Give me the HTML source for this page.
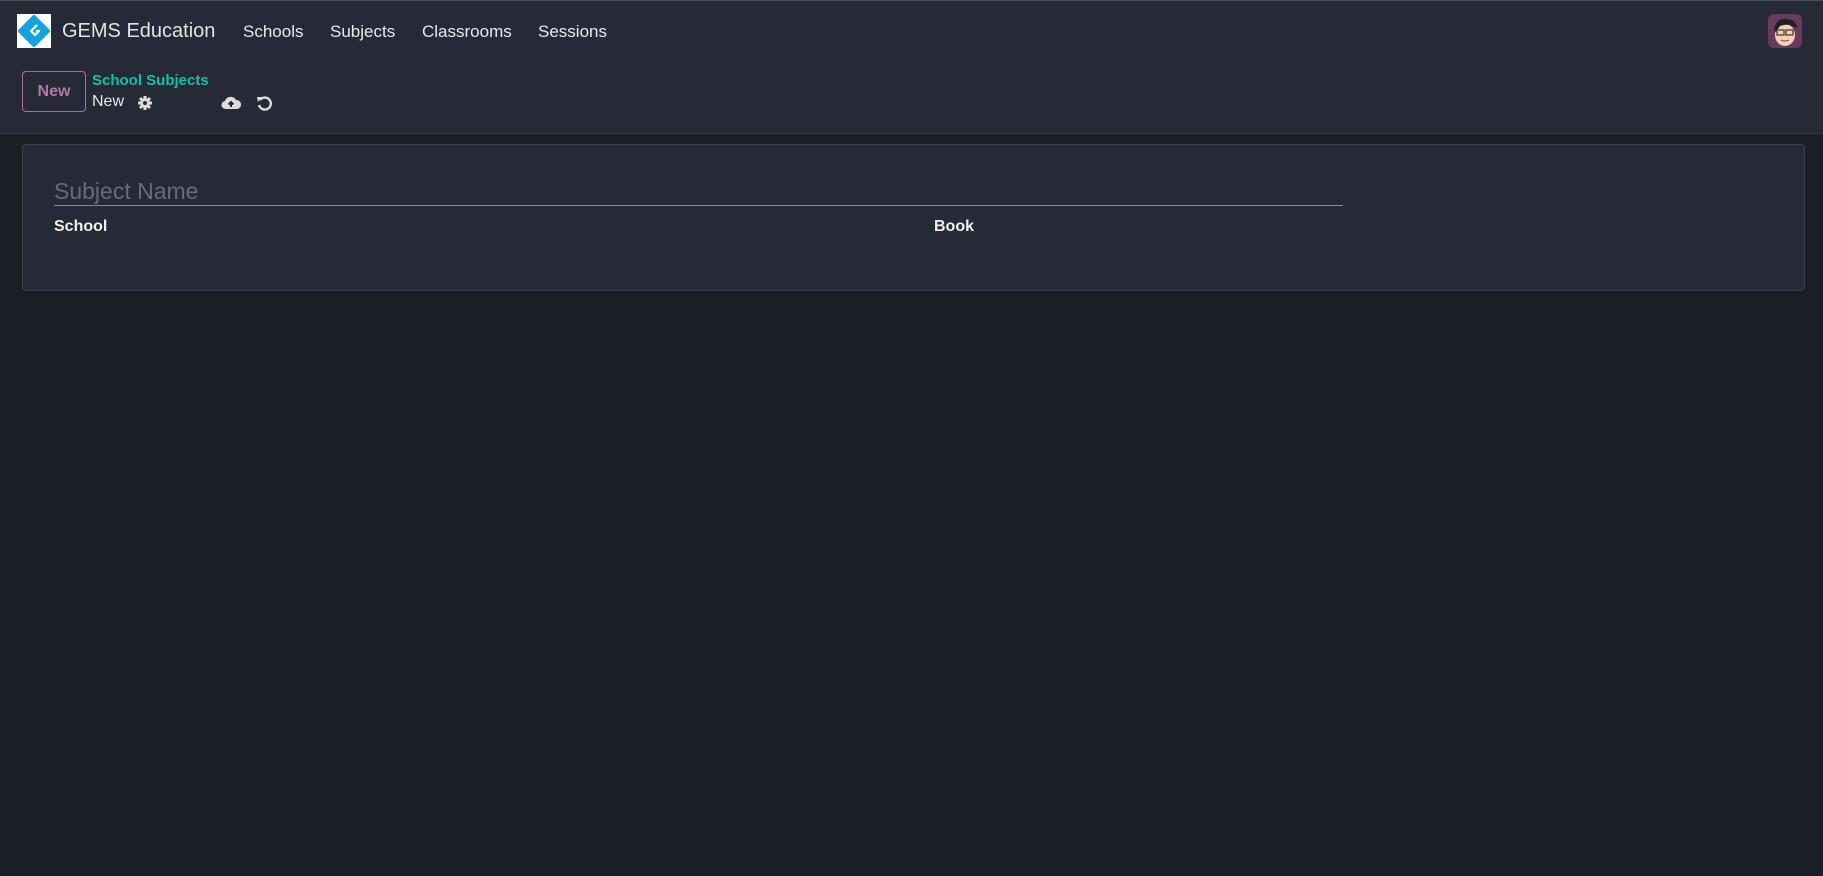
<!DOCTYPE html>
<html><head><meta charset="utf-8"><style>
*{box-sizing:border-box;margin:0;padding:0}
body{width:1823px;height:876px;overflow:hidden;background:#1b1e26;font-family:"Liberation Sans",sans-serif;color:#e4e6eb;position:relative}
.top{position:absolute;left:0;top:0;width:1823px;height:134px;background:#262a36;border-top:1px solid #4a4d55;border-bottom:1px solid #33373f}
.abs{position:absolute;white-space:nowrap}
.nav{font-size:17px;color:#e8e9ec;top:22px}
.card{position:absolute;left:22px;top:144px;width:1783px;height:147px;background:#262a36;border:1px solid #3b404b;border-radius:4px}
</style></head><body>
<div class="top"></div>
<div class="abs" style="left:17px;top:14px;width:34px;height:34px;background:#fff">
<svg width="34" height="34" viewBox="0 0 34 34"><path d="M17 3 L31 17 L17 31 L3 17 Z" fill="#13a3dd" stroke="#13a3dd" stroke-width="4" stroke-linejoin="round"/><path d="M20 11 L14 17 L18 21 L22 17 L19 17" fill="none" stroke="#fff" stroke-width="2.2" stroke-linejoin="round"/></svg></div>
<div class="abs" style="left:62px;top:20px;font-size:20px;color:#e2e3e6">GEMS Education</div>
<div class="abs nav" style="left:243px">Schools</div>
<div class="abs nav" style="left:330px">Subjects</div>
<div class="abs nav" style="left:422px">Classrooms</div>
<div class="abs nav" style="left:538px">Sessions</div>
<div class="abs" style="left:1768px;top:14px;width:34px;height:34px;border-radius:6px;background:#6a3a5e;overflow:hidden">
<svg width="34" height="34" viewBox="0 0 34 34"><ellipse cx="17" cy="21" rx="10" ry="11" fill="#f3cfb3"/><path d="M6 16 Q8 4 18 5 Q28 5 29 14 L26 13 Q20 9 12 12 L8 18Z" fill="#222"/><rect x="9" y="16" width="7" height="5" fill="none" stroke="#444" stroke-width="1.3"/><rect x="18" y="16" width="7" height="5" fill="none" stroke="#444" stroke-width="1.3"/><path d="M13 26 Q17 28 21 26" stroke="#8a4a3a" fill="none"/></svg></div>
<div class="abs" style="left:22px;top:71px;width:64px;height:41px;border:1px solid #a2739c;border-radius:4px;color:#b07aa8;font-size:16px;font-weight:bold;text-align:center;line-height:39px">New</div>
<div class="abs" style="left:92px;top:72px;font-size:15px;font-weight:bold;color:#11c1a8">School Subjects</div>
<div class="abs" style="left:92px;top:93px;font-size:16px;color:#e8e9ec">New</div>
<svg class="abs" style="left:137px;top:95px" width="16" height="16" viewBox="0 0 16 16"><circle cx="8" cy="8" r="5" fill="#ddd"/><g stroke="#ddd" stroke-width="3"><path d="M8 1v14M1 8h14M3 3l10 10M13 3L3 13"/></g><circle cx="8" cy="8" r="2" fill="#262a36"/></svg>
<svg class="abs" style="left:221px;top:95px" width="20" height="16" viewBox="0 0 20 16"><path d="M5 14 A4 4 0 0 1 4 6 A6 6 0 0 1 15 5 A4.5 4.5 0 0 1 16 14Z" fill="#ddd"/><path d="M10 12V7M7.5 9.5L10 7l2.5 2.5" stroke="#262a36" stroke-width="2" fill="none"/></svg>
<svg class="abs" style="left:256px;top:95px" width="16" height="16" viewBox="0 0 16 16"><path d="M4 5 A6 6 0 1 1 3 10" fill="none" stroke="#ddd" stroke-width="2.4"/><path d="M1 2 L6 2 L2 7Z" fill="#ddd"/></svg>
<div class="card"></div>
<div class="abs" style="left:54px;top:178px;font-size:23px;color:#666c7c">Subject Name</div>
<div class="abs" style="left:54px;top:205px;width:1289px;height:1px;background:#11c1a8"></div>
<div class="abs" style="left:54px;top:218px;font-size:16px;font-weight:bold;color:#f0f0f2">School</div>
<div class="abs" style="left:934px;top:218px;font-size:16px;font-weight:bold;color:#f0f0f2">Book</div>
</body></html>
